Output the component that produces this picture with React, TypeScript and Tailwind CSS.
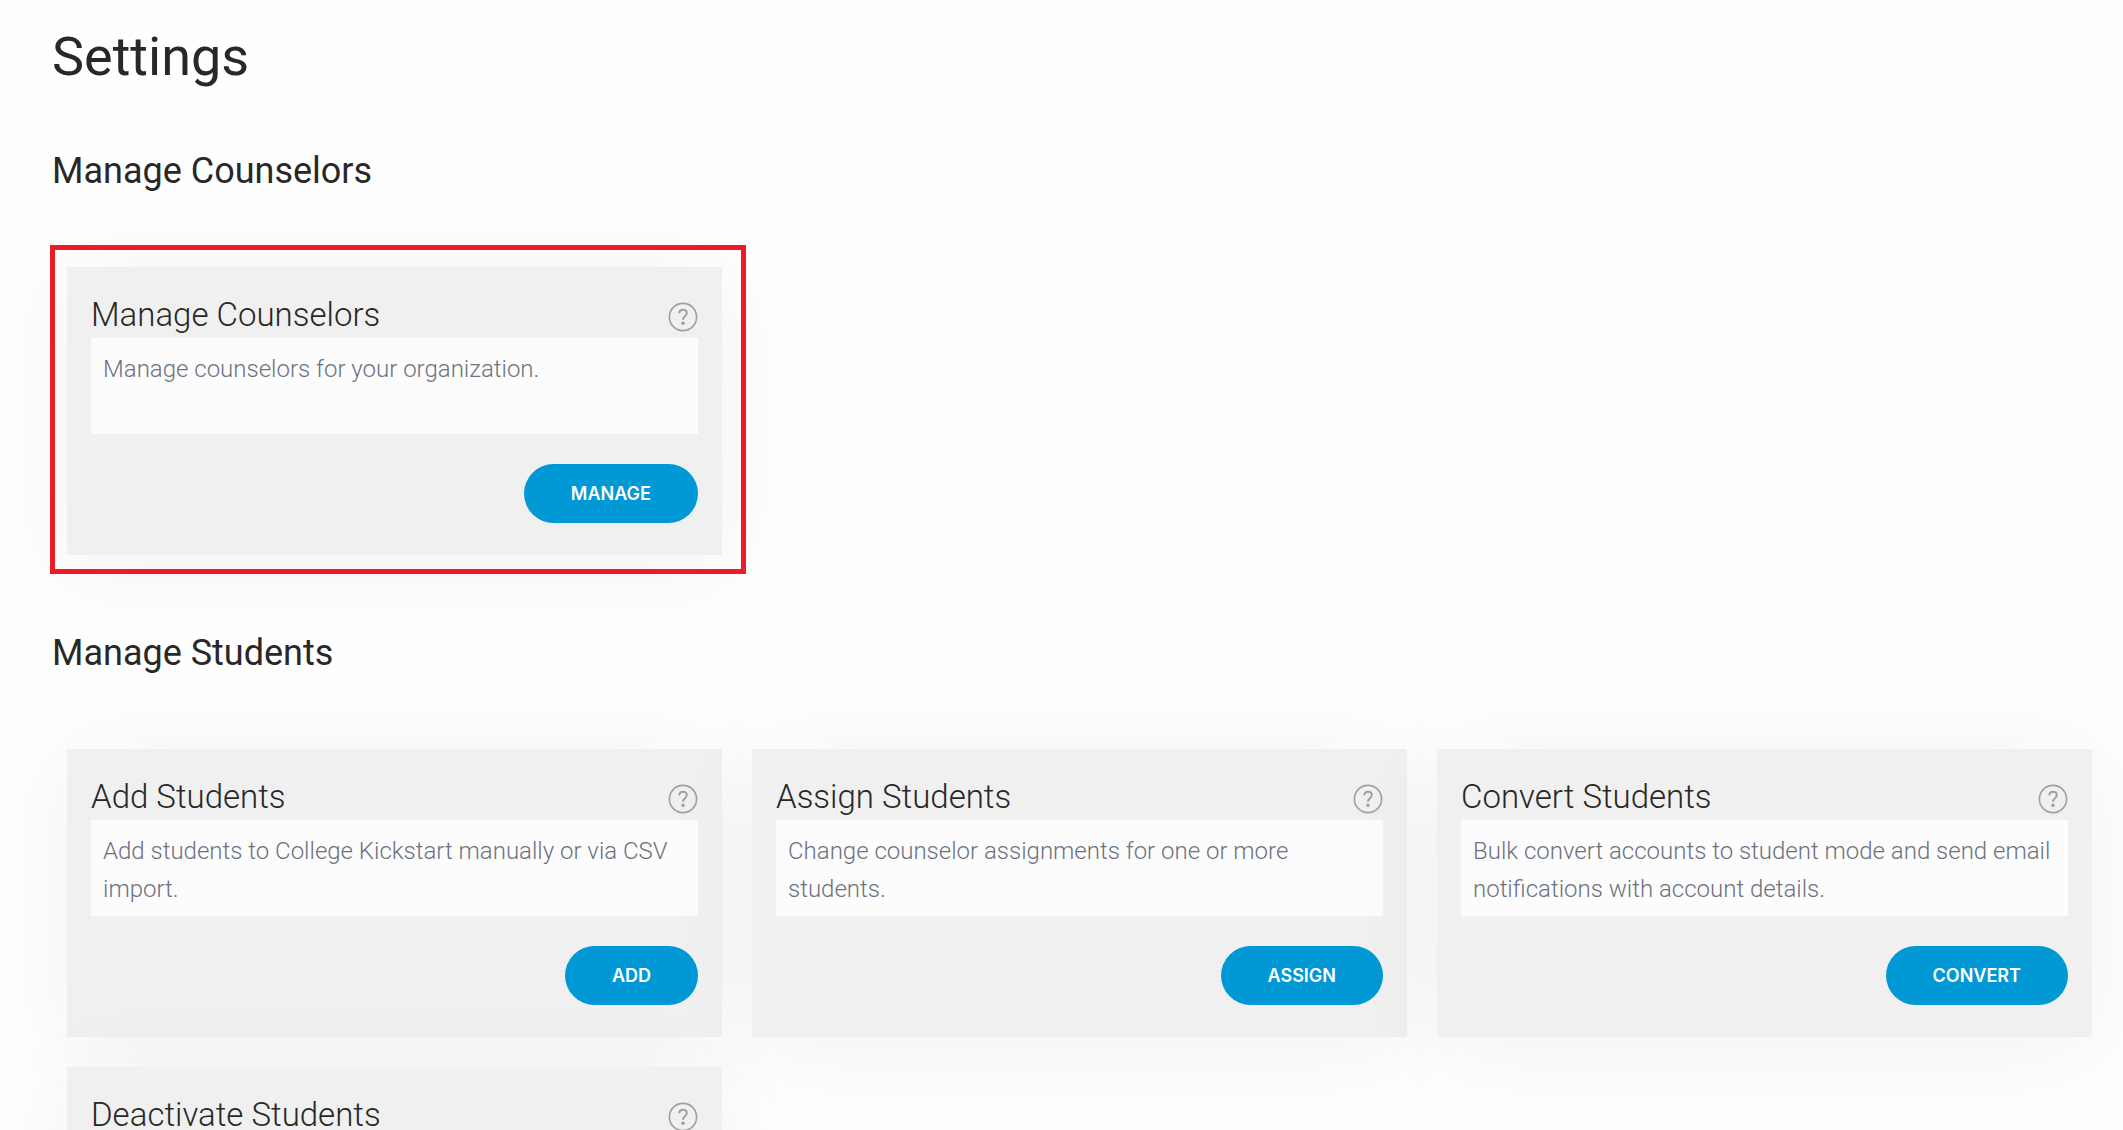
type SettingsCard = {
  title: string;
  description: string;
  action: string;
  highlighted?: boolean;
};

const sections: { name: string; cards: SettingsCard[] }[] = [
  {
    name: "Manage Counselors",
    cards: [
      {
        title: "Manage Counselors",
        description: "Manage counselors for your organization.",
        action: "Manage",
        highlighted: true,
      },
    ],
  },
  {
    name: "Manage Students",
    cards: [
      {
        title: "Add Students",
        description: "Add students to College Kickstart manually or via CSV import.",
        action: "Add",
      },
      {
        title: "Assign Students",
        description: "Change counselor assignments for one or more students.",
        action: "Assign",
      },
      {
        title: "Convert Students",
        description: "Bulk convert accounts to student mode and send email notifications with account details.",
        action: "Convert",
      },
      {
        title: "Deactivate Students",
        description: "Deactivate student accounts.",
        action: "Deactivate",
      },
    ],
  },
];

function HelpIcon() {
  return (
    <svg viewBox="0 0 30 30" className="w-[30px] h-[30px]" fill="none" stroke="#a0a0a0" aria-hidden="true">
      <circle cx="15" cy="15" r="13.6" strokeWidth="1.6" />
      <path d="M11.2 11.3C11.4 9 12.9 7.7 15 7.7s3.8 1.4 3.8 3.4c0 3.1-3.8 3.2-3.8 6.6" strokeWidth="1.9" />
      <circle cx="15" cy="21.3" r="1.7" fill="#a0a0a0" stroke="none" />
    </svg>
  );
}

function Card({ title, description, action, highlighted }: SettingsCard) {
  return (
    <article className="relative bg-[#f0f0f0] px-6 pt-6 pb-8 shadow-[0_10px_90px_rgba(0,0,0,0.05)]">
      <div className="flex items-start justify-between">
        <h3 className="text-[33px] leading-[47px] font-light text-[#282828]">{title}</h3>
        <button type="button" aria-label={`Help: ${title}`} className="mt-[11px] cursor-pointer">
          <HelpIcon />
        </button>
      </div>
      <p className="min-h-24 bg-[#fcfcfc] px-3 pt-3 pb-2 text-[24px] leading-[38px] font-light text-[#6c727f]">
        {description}
      </p>
      <div className="mt-[30px] flex justify-end">
        <button
          type="button"
          className="h-[59px] rounded-[30px] bg-[#0098d5] px-[47px] font-['Inter','Liberation_Sans',sans-serif] text-[18px] font-semibold text-white uppercase cursor-pointer"
        >
          {action}
        </button>
      </div>
      {highlighted && (
        <div className="pointer-events-none absolute -top-[22px] -right-6 -bottom-[19px] -left-[17px] border-5 border-[#ed1c24]" />
      )}
    </article>
  );
}

export default function App() {
  return (
    <main className="h-screen overflow-hidden bg-[#fefefe] pt-5 pr-4 pl-[52px] font-['Roboto','Liberation_Sans',sans-serif] text-[#282828]">
      <h1 className="text-[54px] leading-[74px]">Settings</h1>
      {sections.map((section) => (
        <section key={section.name} className="pt-[52px] pb-[21px]">
          <h2 className="text-[36px] leading-[50px]">{section.name}</h2>
          <div className="grid grid-cols-3 gap-[30px] px-[15px] pt-[71px]">
            {section.cards.map((card) => (
              <Card key={card.title} {...card} />
            ))}
          </div>
        </section>
      ))}
    </main>
  );
}
